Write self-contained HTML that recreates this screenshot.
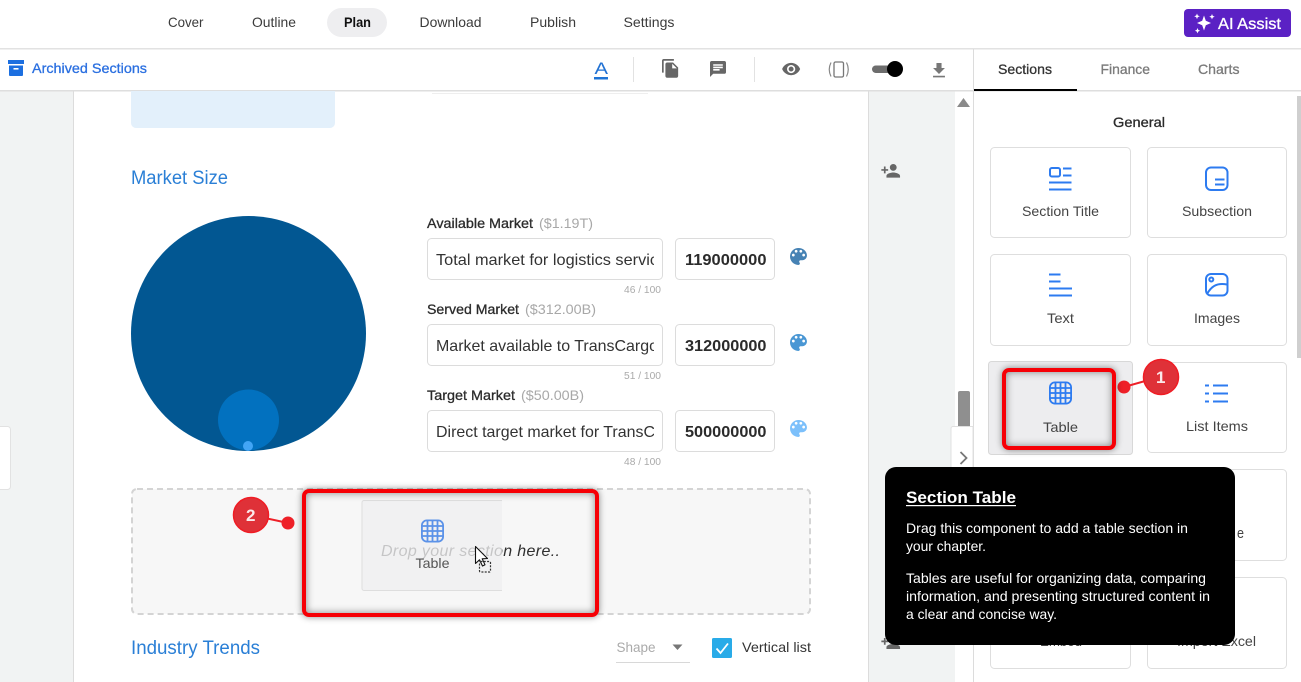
<!DOCTYPE html>
<html lang="en">
<head>
<meta charset="utf-8">
<title>Plan</title>
<style>
html,body{margin:0;padding:0;width:1301px;height:682px;overflow:hidden;background:#fff}
svg.page{position:absolute;left:0;top:0;display:block}
svg text{font-family:"Liberation Sans",Arial,sans-serif;white-space:pre}
.red{position:absolute;box-sizing:border-box;border:4px solid #f60006;border-radius:7px;box-shadow:0 0 7px rgba(0,0,0,.45),inset 0 0 8px rgba(0,0,0,.45)}
.m{stroke-width:.3}
</style>
</head>
<body>
<svg class="page" width="1301" height="682" viewBox="0 0 1301 682" xmlns="http://www.w3.org/2000/svg">
<defs>
<path id="pal" d="M12 3c-4.970 0-9 4.030-9 9s4.030 9 9 9c.83 0 1.500-.67 1.500-1.500 0-.39-.15-.74-.39-1.010-.23-.26-.38-.61-.38-.99 0-.83.67-1.500 1.500-1.500H16c2.760 0 5-2.240 5-5 0-4.420-4.030-8-9-8zm-5.500 9c-.83 0-1.500-.67-1.500-1.500S5.670 9 6.500 9 8 9.670 8 10.500 7.330 12 6.500 12zm3-4C8.670 8 8 7.330 8 6.500S8.670 5 9.500 5s1.500.67 1.500 1.500S10.330 8 9.500 8zm5 0c-.83 0-1.500-.67-1.500-1.500S13.670 5 14.500 5s1.500.67 1.500 1.500S15.330 8 14.500 8zm3 4c-.83 0-1.500-.67-1.500-1.500S16.670 9 17.500 9s1.500.67 1.500 1.500-.67 1.500-1.500 1.500z"/>
<path id="pers" d="M15 12c2.210 0 4-1.790 4-4s-1.790-4-4-4-4 1.790-4 4 1.790 4 4 4zm-9-2V7H4v3H1v2h3v3h2v-3h3v-2H6zm9 4c-2.670 0-8 1.340-8 4v2h16v-2c0-2.660-5.330-4-8-4z"/>
<g id="grid" fill="none" stroke-width="1.800">
<rect x="0.900" y="0.900" width="21.200" height="21.200" rx="5"/>
<path d="M6.500 1V22M11.500 1V22M16.500 1V22M1 6.500H22M1 11.500H22M1 16.500H22"/>
</g>
</defs>

<!-- backgrounds -->
<rect x="0" y="91" width="73" height="591" fill="#f1f3f3"/>
<rect x="73" y="91" width="1" height="591" fill="#dcdcdc"/>
<rect x="868" y="91" width="1" height="591" fill="#dcdcdc"/>
<rect x="869" y="91" width="86" height="591" fill="#f1f3f3"/>
<rect x="0" y="48" width="1301" height="1.500" fill="#e2e2e2"/>
<rect x="0" y="90" width="973" height="1.500" fill="#dedede"/>
<rect x="974" y="90" width="327" height="1.500" fill="#dedede"/>
<rect x="973" y="49" width="1" height="633" fill="#dcdcdc"/>

<!-- left tab -->
<rect x="-4" y="426.500" width="14.500" height="63" rx="3" fill="#fff" stroke="#e2e2e2"/>

<!-- top nav -->
<rect x="327" y="8" width="60" height="29" rx="14.500" fill="#eeeef0"/>
<g font-size="14" fill="#3b3b3b">
<text x="168" y="27" textLength="35.500" lengthAdjust="spacingAndGlyphs">Cover</text>
<text x="252" y="27" textLength="44" lengthAdjust="spacingAndGlyphs">Outline</text>
<text x="344" y="27" textLength="27" lengthAdjust="spacingAndGlyphs" font-weight="700" fill="#111">Plan</text>
<text x="419.500" y="27" textLength="62" lengthAdjust="spacingAndGlyphs">Download</text>
<text x="530" y="27" textLength="46" lengthAdjust="spacingAndGlyphs">Publish</text>
<text x="623.500" y="27" textLength="51" lengthAdjust="spacingAndGlyphs">Settings</text>
</g>

<!-- AI assist -->
<rect x="1184" y="9" width="107" height="28" rx="4" fill="#5b21c4"/>
<path d="M1204 15.500l1.800 5.200 5.200 2.300-5.200 2.300-1.800 5.200-1.800-5.200-5.200-2.300 5.200-2.300z" fill="#fff"/>
<path d="M1197 13.500l.8 2 2 .8-2 .8-.8 2-.8-2-2-.8 2-.8zM1212 14l.8 1.900 1.900.8-1.900.8-.8 1.900-.8-1.900-1.900-.8 1.900-.8zM1197.500 28l.8 1.900 1.800.8-1.800.8-.8 1.900-.8-1.900-1.800-.8 1.800-.8z" fill="#fff"/>
<text x="1218" y="29" font-size="16" fill="#fff" stroke="#fff" class="m" textLength="63" lengthAdjust="spacingAndGlyphs">AI Assist</text>

<!-- archived -->
<rect x="8" y="60" width="16" height="4" fill="#1c6fe0"/>
<path d="M9 65.500H23V75a1 1 0 0 1-1 1H10a1 1 0 0 1-1-1z" fill="#1c6fe0"/>
<rect x="13.500" y="68" width="5" height="1.600" fill="#fff"/>
<text x="32" y="73" font-size="14" fill="#2a6fe0" stroke="#2a6fe0" class="m" textLength="115" lengthAdjust="spacingAndGlyphs">Archived Sections</text>

<!-- toolbar -->
<text x="594.500" y="74" font-size="17" fill="#2272d3" textLength="13.500" lengthAdjust="spacingAndGlyphs">A</text>
<rect x="594" y="77" width="14" height="2.500" fill="#1f74d6"/>
<rect x="633" y="57" width="1" height="25" fill="#e2e2e2"/>
<rect x="754" y="57" width="1" height="25" fill="#e2e2e2"/>
<path transform="translate(660.300 58.200) scale(.85)" fill="#666" d="M16 1H4c-1.100 0-2 .9-2 2v14h2V3h12V1zm-1 4l6 6v10c0 1.100-.9 2-2 2H7.990C6.890 23 6 22.100 6 21l.01-14c0-1.100.89-2 1.990-2h7zm-1 7h5.500L14 6.500V12z"/>
<path transform="translate(708.400 59.400) scale(.8)" fill="#666" d="M20 2H4c-1.100 0-2 .9-2 2v18l4-4h14c1.100 0 2-.9 2-2V4c0-1.100-.9-2-2-2zM6 9h12v2H6V9zm8 5H6v-2h8v2zm4-6H6V6h12v2z"/>
<path transform="translate(781.300 59.200) scale(.82)" fill="#666" d="M12 4.500C7 4.500 2.730 7.610 1 12c1.730 4.390 6 7.500 11 7.500s9.270-3.110 11-7.500c-1.730-4.390-6-7.500-11-7.500zM12 17c-2.760 0-5-2.240-5-5s2.240-5 5-5 5 2.240 5 5-2.240 5-5 5zm0-8c-1.660 0-3 1.340-3 3s1.340 3 3 3 3-1.340 3-3-1.340-3-3-3z"/>
<rect x="834" y="62" width="9.500" height="15" rx="1.500" fill="none" stroke="#777" stroke-width="1.300"/>
<path d="M831 62.500Q827.500 69.500 831 76.500M846.500 62.500Q850 69.500 846.500 76.500" fill="none" stroke="#888" stroke-width="1.200"/>
<rect x="872" y="65.500" width="22" height="7.500" rx="3.700" fill="#6d6d6d"/>
<circle cx="895" cy="69" r="8" fill="#000"/>
<path transform="translate(928.800 60.400) scale(.85)" fill="#777" d="M19 9h-4V3H9v6H5l7 7 7-7zM5 18v2h14v-2H5z"/>

<!-- right tabs -->
<text x="998" y="74" font-size="14" fill="#333" stroke="#333" class="m" textLength="54" lengthAdjust="spacingAndGlyphs">Sections</text>
<text x="1100.500" y="74" font-size="14" fill="#7a7a7a" stroke="#7a7a7a" class="m" textLength="49.500" lengthAdjust="spacingAndGlyphs">Finance</text>
<text x="1198" y="74" font-size="14" fill="#7a7a7a" stroke="#7a7a7a" class="m" textLength="41.500" lengthAdjust="spacingAndGlyphs">Charts</text>
<rect x="974" y="89" width="103" height="2" fill="#000"/>

<!-- main content -->
<rect x="432" y="93" width="216" height="1" fill="#eee"/>
<path d="M131 91H335V123a5 5 0 0 1-5 5H136a5 5 0 0 1-5-5z" fill="#e3f0fb"/>
<text x="131" y="184" font-size="19" fill="#2a7fd6" textLength="97" lengthAdjust="spacingAndGlyphs">Market Size</text>

<circle cx="248.500" cy="333.500" r="117.500" fill="#025792"/>
<circle cx="248.500" cy="420" r="30.500" fill="#0271bf"/>
<circle cx="248" cy="446" r="5" fill="#42a5f5"/>

<g font-size="14">
<text x="427" y="228" fill="#2b2b2b" stroke="#2b2b2b" class="m" textLength="106" lengthAdjust="spacingAndGlyphs">Available Market</text>
<text x="539" y="228" fill="#a8a8a8" textLength="54" lengthAdjust="spacingAndGlyphs">($1.19T)</text>
<text x="427" y="314" fill="#2b2b2b" stroke="#2b2b2b" class="m" textLength="92" lengthAdjust="spacingAndGlyphs">Served Market</text>
<text x="525" y="314" fill="#a8a8a8" textLength="71" lengthAdjust="spacingAndGlyphs">($312.00B)</text>
<text x="427" y="400" fill="#2b2b2b" stroke="#2b2b2b" class="m" textLength="88" lengthAdjust="spacingAndGlyphs">Target Market</text>
<text x="521" y="400" fill="#a8a8a8" textLength="63" lengthAdjust="spacingAndGlyphs">($50.00B)</text>
</g>

<g fill="#fff" stroke="#dcdcdc">
<rect x="427.500" y="238.500" width="235" height="41" rx="4"/>
<rect x="675.500" y="238.500" width="99" height="41" rx="4"/>
<rect x="427.500" y="324.500" width="235" height="41" rx="4"/>
<rect x="675.500" y="324.500" width="99" height="41" rx="4"/>
<rect x="427.500" y="410.500" width="235" height="41" rx="4"/>
<rect x="675.500" y="410.500" width="99" height="41" rx="4"/>
</g>
<svg x="436" y="240" width="218" height="38"><text x="0" y="25" font-size="16" fill="#333" textLength="222" lengthAdjust="spacingAndGlyphs">Total market for logistics servic</text></svg>
<svg x="436" y="326" width="218" height="38"><text x="0" y="25" font-size="16" fill="#333" textLength="222" lengthAdjust="spacingAndGlyphs">Market available to TransCargo</text></svg>
<svg x="436" y="412" width="218" height="38"><text x="0" y="25" font-size="16" fill="#333" textLength="219" lengthAdjust="spacingAndGlyphs">Direct target market for TransC</text></svg>
<g font-size="16" font-weight="700" fill="#2b2b2b">
<text x="685" y="265" textLength="81.500" lengthAdjust="spacingAndGlyphs">119000000</text>
<text x="685" y="351" textLength="81.500" lengthAdjust="spacingAndGlyphs">312000000</text>
<text x="685" y="437" textLength="81.500" lengthAdjust="spacingAndGlyphs">500000000</text>
</g>
<use href="#pal" transform="translate(787.200 245.200) scale(.94)" fill="#4682b4"/>
<use href="#pal" transform="translate(787.200 331.200) scale(.94)" fill="#4a97d4"/>
<use href="#pal" transform="translate(787.200 417.200) scale(.94)" fill="#7cc0fb"/>
<g font-size="10" fill="#aaa">
<text x="624" y="293" textLength="37" lengthAdjust="spacingAndGlyphs">46 / 100</text>
<text x="624" y="379" textLength="37" lengthAdjust="spacingAndGlyphs">51 / 100</text>
<text x="624" y="465" textLength="37" lengthAdjust="spacingAndGlyphs">48 / 100</text>
</g>

<!-- drop zone -->
<rect x="132" y="489" width="678" height="125" rx="5" fill="#f7f7f7" stroke="#d4d4d4" stroke-width="2" stroke-dasharray="6 4"/>
<text x="381" y="556" font-size="16" font-style="italic" fill="#2f2f2f" textLength="179" lengthAdjust="spacing">Drop your section here..</text>
<path d="M502 500.500H364a2 2 0 0 0-2 2V588.500a2 2 0 0 0 2 2H502z" fill="#efeff1" fill-opacity=".78"/>
<path d="M502 500.500H364a2 2 0 0 0-2 2V588.500a2 2 0 0 0 2 2H502" fill="none" stroke="#dedede"/>
<use href="#grid" transform="translate(421 519.500)" stroke="#5b92e8"/>
<text x="415.500" y="568" font-size="14" fill="#555" textLength="34" lengthAdjust="spacingAndGlyphs">Table</text>
<path d="M475.500 546.500V563.500L479.500 559.800L482.500 566L485 564.800L482.200 558.800L487.500 558.500Z" fill="#fff" stroke="#111" stroke-width="1.100" stroke-linejoin="round"/>
<rect x="479.500" y="561.500" width="11" height="10.500" rx="1" fill="none" stroke="#333" stroke-width="1.200" stroke-dasharray="2 1.300"/>

<text x="131" y="654" font-size="19" fill="#2a7fd6" textLength="129" lengthAdjust="spacingAndGlyphs">Industry Trends</text>
<text x="616.500" y="652" font-size="14" fill="#aaa" textLength="39" lengthAdjust="spacingAndGlyphs">Shape</text>
<path d="M672.500 644.500H682.500L677.500 650Z" fill="#777"/>
<rect x="616" y="662" width="74" height="1" fill="#d8d8d8"/>
<rect x="712" y="638" width="20" height="20" rx="1.500" fill="#29abe8"/>
<path d="M716.500 648.500L720.500 653L728 643.500" fill="none" stroke="#fff" stroke-width="1.800"/>
<text x="742" y="652" font-size="14" fill="#333" textLength="69" lengthAdjust="spacingAndGlyphs">Vertical list</text>

<!-- side gutter -->
<use href="#pers" transform="translate(880.500 160.600) scale(.85)" fill="#666"/>
<use href="#pers" transform="translate(880.500 632) scale(.85)" fill="#666"/>
<path d="M957 107L963.500 98L970 107Z" fill="#8a8a8a"/>
<rect x="958" y="391" width="12" height="37" rx="2" fill="#8f8f8f"/>
<path d="M973 426.500H953a2 2 0 0 0-2 2V500H973Z" fill="#fff" stroke="#e0e0e0"/>
<path d="M960.500 452L966.500 458L960.500 464" fill="none" stroke="#777" stroke-width="1.800"/>

<!-- right panel -->
<rect x="1297" y="96" width="4" height="262" fill="#cfcfcf"/>
<text x="1113" y="127" font-size="14" fill="#2b2b2b" stroke="#2b2b2b" class="m" textLength="52" lengthAdjust="spacingAndGlyphs">General</text>
<g fill="#fff" stroke="#dedede">
<rect x="990.500" y="147.500" width="140" height="90" rx="4"/>
<rect x="1147.500" y="147.500" width="139" height="90" rx="4"/>
<rect x="990.500" y="254.500" width="140" height="91" rx="4"/>
<rect x="1147.500" y="254.500" width="139" height="91" rx="4"/>
<rect x="1147.500" y="362.500" width="139" height="90" rx="4"/>
<rect x="1147.500" y="469.500" width="139" height="91" rx="4"/>
<rect x="990.500" y="469.500" width="140" height="91" rx="4"/>
<rect x="990.500" y="577.500" width="140" height="91" rx="4"/>
<rect x="1147.500" y="577.500" width="139" height="91" rx="4"/>
</g>
<rect x="988.500" y="361.500" width="144" height="93" rx="3" fill="#ededef" stroke="#d8d8d8"/>

<!-- card icons -->
<g fill="none" stroke="#2d7bf0" stroke-width="2">
<rect x="1050" y="168" width="10" height="8.500" rx="1.800"/>
<path d="M1063 168.500H1071.500M1063 175.500H1071.500M1049 182.500H1071.500M1049 189.500H1071.500"/>
<rect x="1206" y="167.500" width="21.500" height="22.500" rx="5"/>
<path d="M1215 179.500H1224.500M1215 184.500H1224.500"/>
<path d="M1049 274.500H1060.500M1049 281.500H1060.500M1049 288.500H1072M1049 295.500H1072"/>
<rect x="1206" y="274" width="21.500" height="21.500" rx="5"/>
<circle cx="1211.300" cy="279.500" r="2"/>
<path d="M1207 294C1211 287 1216 282.500 1227 284.500"/>
<path d="M1213 385.500H1228M1213 393.500H1228M1213 401.500H1228"/>
<path d="M1205 385.500H1209M1205 393.500H1209M1205 401.500H1209"/>
</g>
<use href="#grid" transform="translate(1049 381.500)" stroke="#2d7bf0"/>

<g font-size="14" fill="#444">
<text x="1022" y="216" textLength="77" lengthAdjust="spacingAndGlyphs">Section Title</text>
<text x="1182" y="216" textLength="70" lengthAdjust="spacingAndGlyphs">Subsection</text>
<text x="1047" y="323" textLength="27" lengthAdjust="spacingAndGlyphs">Text</text>
<text x="1194" y="323" textLength="46" lengthAdjust="spacingAndGlyphs">Images</text>
<text x="1043" y="432" textLength="35" lengthAdjust="spacingAndGlyphs">Table</text>
<text x="1186" y="431" textLength="62" lengthAdjust="spacingAndGlyphs">List Items</text>
<text x="1237" y="538" font-size="15" textLength="7" lengthAdjust="spacingAndGlyphs">e</text>
<text x="1040" y="646" textLength="42" lengthAdjust="spacingAndGlyphs">Embed</text>
<text x="1177" y="646" textLength="79" lengthAdjust="spacingAndGlyphs">Import Excel</text>
</g>

<!-- callouts -->
<g>
<path d="M1124 387L1161 376.500" stroke="#ee2028" stroke-width="2"/>
<circle cx="1124" cy="387" r="6.500" fill="#ee2028"/>
<circle cx="1161" cy="377" r="17.500" fill="#df3138" stroke="#f01c24" stroke-width="1.500"/>
<text x="1156" y="383" font-size="17" font-weight="700" fill="#fbe9ea">1</text>
<path d="M288 523L251 515" stroke="#ee2028" stroke-width="2"/>
<circle cx="288" cy="523" r="6.500" fill="#ee2028"/>
<circle cx="251" cy="515" r="17.500" fill="#df3138" stroke="#f01c24" stroke-width="1.500"/>
<text x="246" y="521" font-size="17" font-weight="700" fill="#fbe9ea">2</text>
</g>

<!-- tooltip -->
<rect x="885" y="467" width="350" height="178" rx="11" fill="#000"/>
<text x="906" y="503" font-size="17" font-weight="700" fill="#fff" textLength="110" lengthAdjust="spacingAndGlyphs">Section Table</text>
<rect x="906" y="505" width="110" height="1.200" fill="#fff"/>
<g font-size="14" fill="#fff">
<text x="906" y="533" textLength="282" lengthAdjust="spacingAndGlyphs">Drag this component to add a table section in</text>
<text x="906" y="551" textLength="80" lengthAdjust="spacingAndGlyphs">your chapter.</text>
<text x="906" y="583" textLength="300" lengthAdjust="spacingAndGlyphs">Tables are useful for organizing data, comparing</text>
<text x="906" y="601" textLength="304" lengthAdjust="spacingAndGlyphs">information, and presenting structured content in</text>
<text x="906" y="619" textLength="151" lengthAdjust="spacingAndGlyphs">a clear and concise way.</text>
</g>
</svg>

<div class="red" style="left:1002px;top:367.500px;width:114px;height:82px"></div>
<div class="red" style="left:302px;top:489px;width:297px;height:128px"></div>
</body>
</html>
